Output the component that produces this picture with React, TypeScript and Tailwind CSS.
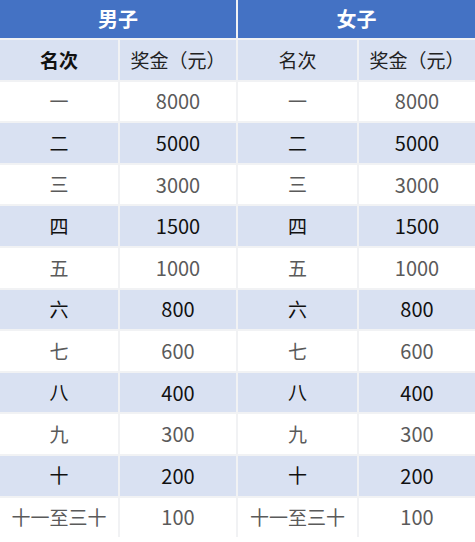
import React from "react";

const rows: [string, string][] = [
  ["一", "8000"],
  ["二", "5000"],
  ["三", "3000"],
  ["四", "1500"],
  ["五", "1000"],
  ["六", "800"],
  ["七", "600"],
  ["八", "400"],
  ["九", "300"],
  ["十", "200"],
  ["十一至三十", "100"],
];

const font = { fontFamily: '"Noto Sans CJK SC", "Noto Sans", sans-serif' };

export default function App() {
  return (
    <div className="w-[475px] h-[542px] bg-white overflow-hidden" style={font}>
      <div className="grid grid-cols-[118px_116px_119px_116px] grid-rows-[38px_repeat(12,39.6px)] gap-[2px] bg-[#f1f2f4]">
        <div className="col-span-2 bg-[#4472c4] text-white font-bold text-[20px] flex items-center justify-center">男子</div>
        <div className="col-span-2 bg-[#4472c4] text-white font-bold text-[20px] flex items-center justify-center">女子</div>
        <div className="bg-[#d9e1f2] text-[#111] font-bold text-[19px] flex items-center justify-center">名次</div>
        <div className="bg-[#d9e1f2] text-[#222] text-[19px] flex items-center justify-center">奖金（元）</div>
        <div className="bg-[#d9e1f2] text-[#222] text-[19px] flex items-center justify-center">名次</div>
        <div className="bg-[#d9e1f2] text-[#222] text-[19px] flex items-center justify-center">奖金（元）</div>
        {rows.map(([rank, amount], i) => {
          const blue = i % 2 === 1;
          const bg = blue ? "bg-[#d9e1f2] text-[#111]" : "bg-white text-[#5a5a5a]";
          return (
            <React.Fragment key={i}>
              <div className={`${bg} text-[19px] flex items-center justify-center`}>{rank}</div>
              <div className={`${bg} text-[20px] flex items-center justify-center`}>{amount}</div>
              <div className={`${bg} text-[19px] flex items-center justify-center`}>{rank}</div>
              <div className={`${bg} text-[20px] flex items-center justify-center`}>{amount}</div>
            </React.Fragment>
          );
        })}
      </div>
    </div>
  );
}
